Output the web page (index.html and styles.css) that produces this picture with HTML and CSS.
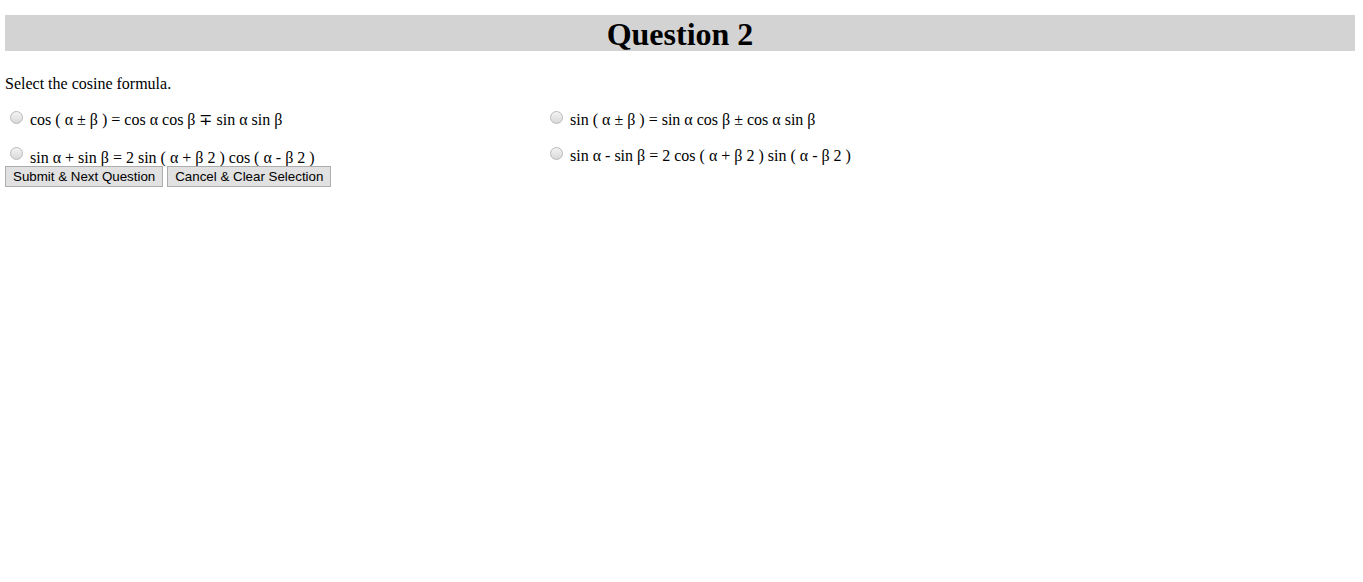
FILE: index.html
```html
<!DOCTYPE html>
<html lang="en">
<head>
<meta charset="utf-8">
<title>Question 2</title>
<link rel="stylesheet" href="styles.css">
</head>
<body>
<div class="page">
  <h1 class="title">Question 2</h1>
  <p class="prompt">Select the cosine formula.</p>
  <form class="quiz">
    <div class="options">
      <div class="col col-left">
        <label class="opt"><input type="radio" name="q2" class="radio"> cos ( α ± β ) = cos α cos β ∓ sin α sin β</label>
        <label class="opt opt-low"><input type="radio" name="q2" class="radio radio-up"> sin α + sin β = 2 sin ( α + β 2 ) cos ( α - β 2 )</label>
      </div>
      <div class="col col-right">
        <label class="opt"><input type="radio" name="q2" class="radio"> sin ( α ± β ) = sin α cos β ± cos α sin β</label>
        <label class="opt"><input type="radio" name="q2" class="radio"> sin α - sin β = 2 cos ( α + β 2 ) sin ( α - β 2 )</label>
      </div>
    </div>
    <div class="actions">
      <button type="button" class="btn">Submit &amp; Next Question</button>
      <button type="reset" class="btn">Cancel &amp; Clear Selection</button>
    </div>
  </form>
</div>
</body>
</html>
```
FILE: styles.css
```css
html, body {
  margin: 0;
  padding: 0;
  background: #ffffff;
}

body {
  font-family: "Liberation Serif", "Times New Roman", serif;
  font-size: 16px;
  color: #000000;
}

.page {
  padding: 15px 8px 0 5px;
}

.title {
  margin: 0;
  height: 36px;
  line-height: 38px;
  background: #d3d3d3;
  text-align: center;
  font-size: 32px;
  font-weight: bold;
  overflow: visible;
}

.prompt {
  margin: 24px 0 0 0;
  line-height: normal;
}

.quiz {
  margin: 0;
}

.options {
  display: grid;
  grid-template-columns: 540px 1fr;
  margin-top: 15px;
}

.col {
  display: flex;
  flex-direction: column;
}

.col-left {
  gap: 16px;
}

.col-right {
  gap: 16px;
}

.opt {
  display: block;
  height: 20px;
  line-height: 20px;
  white-space: nowrap;
}

.opt-low {
  height: 22px;
}

.radio {
  -webkit-appearance: none;
  appearance: none;
  width: 13px;
  height: 13px;
  margin: 3px 3px 0 5px;
  border: 1px solid #b9b9b9;
  border-radius: 50%;
  background: linear-gradient(#f4f4f4, #d9d9d9);
  box-sizing: border-box;
  vertical-align: 1px;
}

.radio-up {
  vertical-align: 3px;
}

.actions {
  display: flex;
  gap: 4px;
}

.btn {
  -webkit-appearance: none;
  appearance: none;
  height: 21px;
  margin: 0;
  padding: 1px 7px;
  border: 1px solid #adadad;
  background: #e1e1e1;
  color: #000000;
  font-family: "Liberation Sans", Arial, sans-serif;
  font-size: 13.333px;
  line-height: 17px;
  border-radius: 0;
}
```
